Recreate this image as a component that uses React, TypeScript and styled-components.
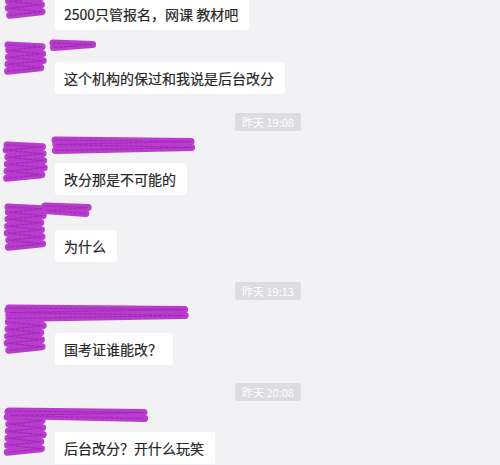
import React from "react";
import styled, { createGlobalStyle } from "styled-components";

const GlobalStyle = createGlobalStyle`
  html, body {
    margin: 0;
    padding: 0;
    background: #f2f1f4;
  }
  body {
    font-family: "Noto Sans CJK SC", "Noto Sans", sans-serif;
    overflow: hidden;
  }
`;

const ChatWindow = styled.div`
  width: 500px;
  height: 465px;
  overflow: hidden;
  background: #f2f1f4;
`;

const MessageRow = styled.div<{ $gap: number }>`
  position: relative;
  display: flex;
  align-items: flex-start;
  gap: 10px;
  padding-left: 5px;
  margin-top: ${(p) => p.$gap}px;
`;

const AvatarSpot = styled.div`
  width: 40px;
  height: 32px;
  flex-shrink: 0;
`;

const MessageBody = styled.div`
  display: flex;
  flex-direction: column;
  align-items: flex-start;
`;

const NameSpot = styled.div<{ $h: number }>`
  height: ${(p) => p.$h}px;
`;

const Bubble = styled.div`
  background: #ffffff;
  color: #262626;
  font-size: 14px;
  line-height: 20px;
  padding: 6px 11px 6px 9px;
  border-radius: 3px;
  white-space: nowrap;
  -webkit-text-stroke: 0.2px #262626;
`;

const TimeRow = styled.div<{ $gap: number }>`
  display: flex;
  justify-content: center;
  padding-left: 36px;
  margin-top: ${(p) => p.$gap}px;
`;

const TimePill = styled.span`
  display: inline-flex;
  align-items: center;
  height: 18px;
  padding: 0 7px;
  background: #dddce0;
  color: #ffffff;
  font-size: 11px;
  border-radius: 2px;
`;

const Scribble = styled.svg`
  position: absolute;
  left: 0;
  top: 0;
  pointer-events: none;
  overflow: visible;
`;

type Box = { x0: number; x1: number; y0: number; y1: number };

// zigzag back and forth over a box, like a marker redaction
function zigzag(b: Box, step: number, seed: number) {
  let d = `M${b.x0},${b.y0}`;
  let y = b.y0;
  let left = true;
  let i = 0;
  while (y <= b.y1) {
    const jitter = ((seed * 7 + i * 13) % 5) - 2;
    const x = left ? b.x1 + jitter * 0.6 : b.x0 - jitter * 0.4;
    d += ` L${x},${y + step / 2}`;
    y += step;
    left = !left;
    i++;
  }
  return d;
}

const MarkerScribble: React.FC<{ avatar: Box; name?: Box; seed: number }> = ({
  avatar,
  name,
  seed,
}) => {
  const paths = [zigzag(avatar, 3.5, seed)];
  if (name) paths.push(zigzag(name, 3, seed + 3));
  return (
    <Scribble width="200" height="60">
      {paths.map((d, i) => (
        <g key={i}>
          <path
            d={d}
            fill="none"
            stroke="#b83ccd"
            strokeWidth={7}
            strokeLinecap="round"
            strokeLinejoin="round"
          />
          <path
            d={d}
            fill="none"
            stroke="#8a1ca2"
            strokeWidth={1.2}
            strokeOpacity={0.5}
            strokeLinecap="round"
            strokeDasharray="3 2"
          />
        </g>
      ))}
    </Scribble>
  );
};

type Msg = {
  kind: "msg";
  gap: number;
  head: number;
  text: string;
  avatar: Box;
  name?: Box;
};
type Stamp = { kind: "time"; gap: number; text: string };

const items: (Msg | Stamp)[] = [
  {
    kind: "msg",
    gap: -2,
    head: 0,
    text: "2500只管报名，网课 教材吧",
    avatar: { x0: 9, x1: 42, y0: -2, y1: 18 },
  },
  {
    kind: "msg",
    gap: 10,
    head: 22,
    text: "这个机构的保过和我说是后台改分",
    avatar: { x0: 8, x1: 42, y0: 5, y1: 30 },
    name: { x0: 53, x1: 92, y0: 3, y1: 8 },
  },
  { kind: "time", gap: 19, text: "昨天 19:08" },
  {
    kind: "msg",
    gap: 6,
    head: 26,
    text: "改分那是不可能的",
    avatar: { x0: 7, x1: 43, y0: 8, y1: 42 },
    name: { x0: 55, x1: 191, y0: 3, y1: 14 },
  },
  {
    kind: "msg",
    gap: 8,
    head: 27,
    text: "为什么",
    avatar: { x0: 8, x1: 42, y0: 4, y1: 44 },
    name: { x0: 45, x1: 87, y0: 3, y1: 11 },
  },
  { kind: "time", gap: 20, text: "昨天 19:13" },
  {
    kind: "msg",
    gap: 5,
    head: 28,
    text: "国考证谁能改？",
    avatar: { x0: 8, x1: 42, y0: 5, y1: 44 },
    name: { x0: 9, x1: 184, y0: 3, y1: 14 },
  },
  { kind: "time", gap: 18, text: "昨天 20:08" },
  {
    kind: "msg",
    gap: 7,
    head: 24,
    text: "后台改分？开什么玩笑",
    avatar: { x0: 8, x1: 42, y0: 4, y1: 44 },
    name: { x0: 9, x1: 144, y0: 3, y1: 11 },
  },
];

const App: React.FC = () => {
  return (
    <>
      <GlobalStyle />
      <ChatWindow>
        {items.map((item, i) =>
          item.kind === "time" ? (
            <TimeRow key={i} $gap={item.gap}>
              <TimePill>{item.text}</TimePill>
            </TimeRow>
          ) : (
            <MessageRow key={i} $gap={item.gap}>
              <AvatarSpot />
              <MessageBody>
                <NameSpot $h={item.head} />
                <Bubble>{item.text}</Bubble>
              </MessageBody>
              <MarkerScribble avatar={item.avatar} name={item.name} seed={i} />
            </MessageRow>
          )
        )}
      </ChatWindow>
    </>
  );
};

export default App;
